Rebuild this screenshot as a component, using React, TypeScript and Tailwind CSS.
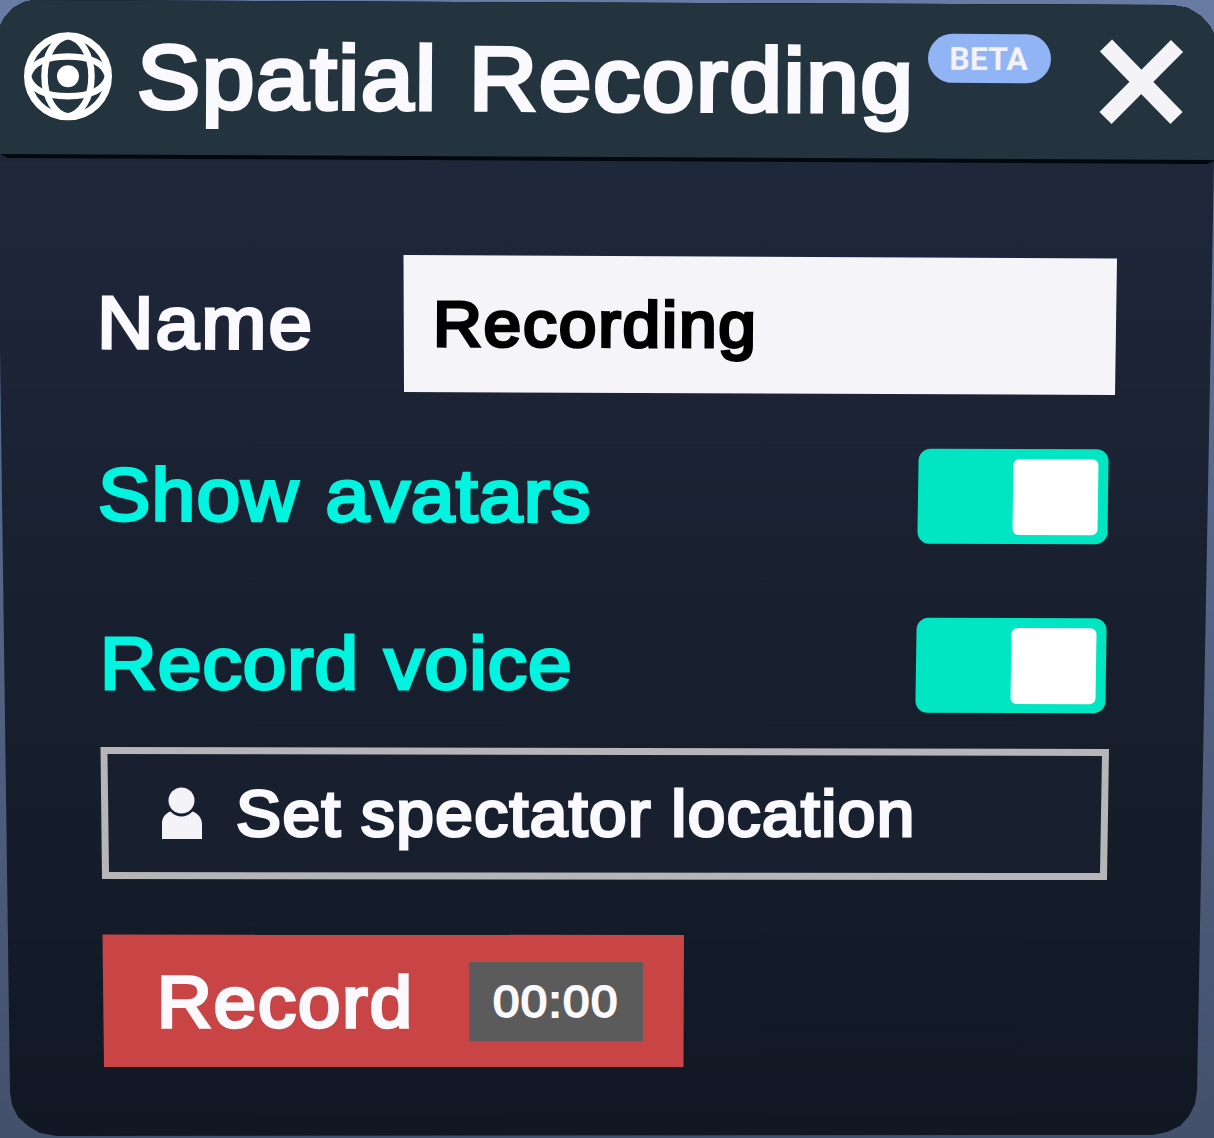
import React from "react";

const textBase = "block whitespace-nowrap leading-none origin-left [paint-order:stroke_fill] [stroke-linejoin:round]";

function GlobeIcon() {
  return (
    <svg className="h-[90px] w-[90px] shrink-0" viewBox="0 0 90 90" fill="none" stroke="white" strokeWidth="6.5">
      <circle cx="45" cy="45.3" r="40.5" strokeWidth="7" />
      <path d="M5 45.3C8 34 20 25.500 45 25.500S82 34 85 45.300C82 57 70 65.300 45 65.300S8 57 5 45.300Z" />
      <path d="M45 5C33 7 21.500 22 21.500 45.300S33 83.500 45 85.500C57 83.500 68.500 68.500 68.500 45.300S57 7 45 5Z" />
      <circle cx="45" cy="45.3" r="11" fill="white" stroke="none" />
    </svg>
  );
}

function PersonIcon() {
  return (
    <svg className="h-[52px] w-[42px] shrink-0" viewBox="0 0 42 52" fill="#f4f3f8">
      <circle cx="20.5" cy="13.5" r="13" />
      <path d="M1 52V36C1 31 4 26.500 9.500 24.500Q14.500 29.500 20.500 29.500T31.500 24.500C37 26.500 41 31 41 37V52Z" />
    </svg>
  );
}

function Toggle() {
  return (
    <div
      role="switch"
      aria-checked="true"
      className="mt-[0.5px] flex h-[95px] w-[190px] -skew-x-[0.7deg] rotate-[0.15deg] justify-end rounded-[12px] bg-[#00e6c3] p-[10px]"
    >
      <div className="h-[76px] w-[85px] rounded-[6px] bg-white" />
    </div>
  );
}

export default function App() {
  return (
    <div className="h-[1138px] w-[1214px] overflow-hidden bg-linear-to-b from-[#687ba2] to-[#42506b] font-['Liberation_Sans',sans-serif] text-[#faf9fd]">
      <div className="flex h-[1138px] w-[1214px] flex-col bg-linear-to-b from-[#212a3e] to-[#111824] [clip-path:path('M0_26_L4_18_L13_8_L24_2_L33_0_L700_3_L1172_5_L1188_8_L1201_16_L1210_26_L1214_34_L1214_162_L1197_1091_L1195_1104_L1189_1116_L1180_1126_L1167_1132_L1153_1135_L56_1136_L40_1133_L28_1126_L18_1117_L12_1105_L10_1092_L0_350_Z')]">
        <header className="h-[166px] shrink-0 bg-[#02080d] [clip-path:polygon(0_0,100%_0,100%_161px,1207px_164px,8px_158px,0_154px)]">
          <div className="flex h-[166px] bg-[#24343e] [clip-path:polygon(0_0,100%_0,100%_160px,0_154px)]">
            <div className="ml-[23px] mt-[31px] w-[90px]">
              <GlobeIcon />
            </div>
            <h1 className={`${textBase} ml-[24px] mt-[32px] w-[788px] rotate-[0.3deg] scale-x-[1.05] text-[90px] font-normal tracking-[1.6px] [word-spacing:3px] [-webkit-text-stroke:4px_#faf9fd]`}>
              Spatial Recording
            </h1>
            <span className="ml-[3px] mt-[34px] flex h-[49px] w-[123px] rotate-[0.3deg] items-center justify-center rounded-full bg-[#91b5f4] pr-[2px] font-[Roboto,sans-serif] text-[32px] font-bold leading-none text-[#f3f2f8]">
              BETA
            </span>
            <svg className="ml-[48px] mt-[39px] h-[86px] w-[86px]" viewBox="0 0 86 86" stroke="#f4f3f8" strokeWidth="17">
              <path d="M7 6.500 77.500 79M78 7 6.500 79" />
            </svg>
          </div>
        </header>

        <main className="flex flex-col pl-[100px]">
          <div className="mt-[88px] flex h-[142px]">
            <label className={`${textBase} -ml-[3px] mt-[32px] w-[306px] scale-x-[1.055] rotate-[0.2deg] text-[74px] tracking-[2.1px] [-webkit-text-stroke:3.2px_#faf9fd]`}>
              Name
            </label>
            <div className="h-[142px] w-[714px] bg-[#f5f4f9] pl-[30px] pt-[38px] text-black [clip-path:polygon(0.5px_1px,100%_4.5px,712px_141px,1px_138px)]">
              <span className={`${textBase} w-[600px] rotate-[0.2deg] scale-x-[1.055] text-[64px] tracking-[1.8px] [-webkit-text-stroke:3.2px_#000]`}>
                Recording
              </span>
            </div>
          </div>
          <div className="mt-[52px] flex h-[96px] text-[#00f4df]">
            <span className={`${textBase} -ml-[2px] mt-[9.5px] w-[820px] rotate-[0.2deg] scale-x-[1.06] text-[74px] tracking-[1.2px] [word-spacing:3px] [-webkit-text-stroke:3.2px_#00f4df]`}>
              Show avatars
            </span>
            <Toggle />
          </div>
          <div className="mt-[73px] flex h-[96px] text-[#00f4df]">
            <span className={`${textBase} mt-[10px] w-[816px] scale-x-[1.06] text-[74px] tracking-[1px] [word-spacing:2px] [-webkit-text-stroke:3.2px_#00f4df]`}>
              Record voice
            </span>
            <Toggle />
          </div>
          <button className="mt-[34px] block h-[134px] w-[1010px] bg-[#b6b6b9] text-left [clip-path:polygon(0.5px_0,1009px_2px,1007px_133px,2px_132px)]">
            <span className="flex h-[134px] w-[1010px] items-start bg-[#181f2e] pl-[61px] [clip-path:polygon(7.5px_7px,1002px_9px,1000px_126px,9px_125px)]">
              <span className="mt-[40px] flex">
                <PersonIcon />
              </span>
              <span className={`${textBase} ml-[33px] mt-[35px] scale-x-[1.055] text-[64px] tracking-[1.4px] [word-spacing:-1px] [-webkit-text-stroke:3px_#faf9fd]`}>
                Set spectator location
              </span>
            </span>
          </button>
          <button className="ml-[2px] mt-[53px] flex h-[133px] w-[582px] items-start bg-[#c94545] text-left [clip-path:polygon(0.5px_0.5px,100%_1px,581.5px_100%,2px_100%)]">
            <span className={`${textBase} ml-[55px] mt-[32px] w-[310px] scale-x-[1.055] text-[72px] tracking-[1.9px] [-webkit-text-stroke:3.4px_#faf9fd]`}>
              Record
            </span>
            <span className="ml-[2px] mt-[28px] flex h-[79px] w-[174px] items-center bg-[#5b5b5b]">
              <span className={`${textBase} ml-[24px] scale-x-[1.055] text-[45px] tracking-[1.3px] [-webkit-text-stroke:2px_#faf9fd]`}>
                00:00
              </span>
            </span>
          </button>
        </main>
      </div>
    </div>
  );
}
